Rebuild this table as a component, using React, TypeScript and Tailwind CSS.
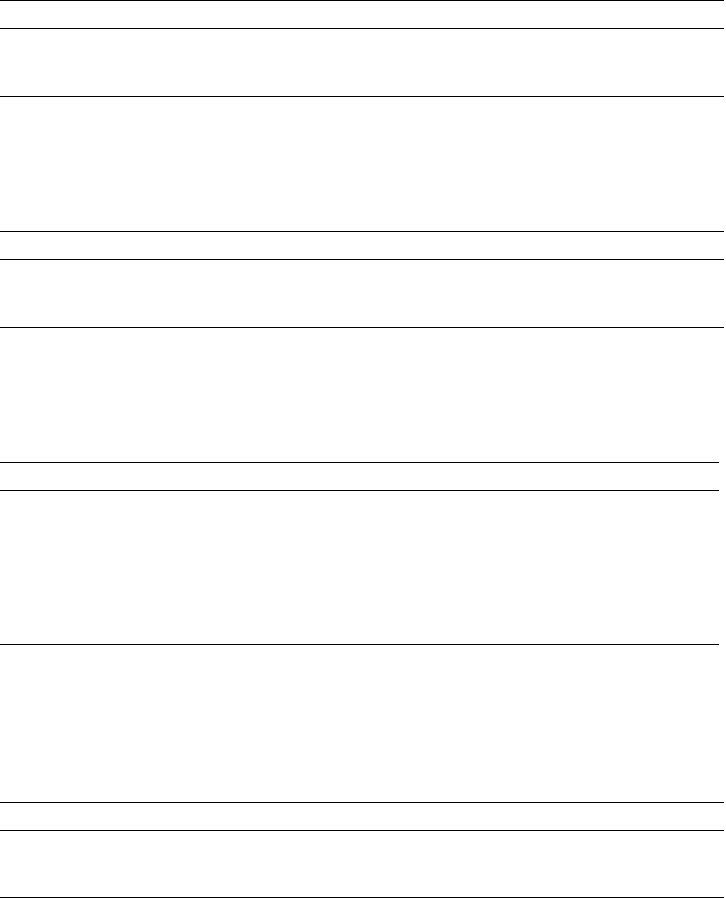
import React from "react";

type Section = { body: string; gap: string; width: string };

const sections: Section[] = [
    { body: "h-[68px]", gap: "h-[134px]", width: "w-[724px]" },
    { body: "h-[68px]", gap: "h-[134px]", width: "w-[724px]" },
    { body: "h-[154px]", gap: "h-[157px]", width: "w-[719px]" },
    { body: "h-[67px]", gap: "h-0", width: "w-[724px]" },
];

const App: React.FC = () => {
    return (
        <div className="bg-white min-h-[898px] w-[726px] font-['Liberation_Sans',sans-serif]">
            {sections.map((s, i) => (
                <div key={i} className={s.width}>
                    <div className="h-[28px] border-t border-black" />
                    <div className={`${s.body} border-t border-black`} />
                    <div className="border-t border-black" />
                    <div className={s.gap} />
                </div>
            ))}
        </div>
    );
};

export default App;
